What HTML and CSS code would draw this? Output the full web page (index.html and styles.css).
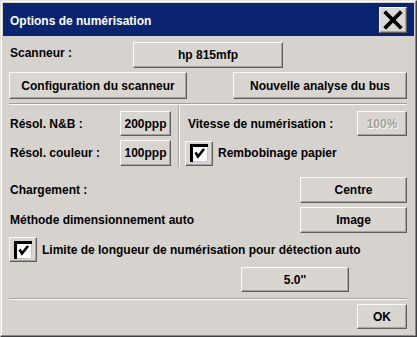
FILE: index.html
```html
<!DOCTYPE html>
<html lang="fr">
<head>
<meta charset="UTF-8" />
<title>Options de numérisation</title>
<link rel="stylesheet" href="styles.css">
</head>
<body>

<div class="fenetre">
  <div class="titre">
    <span>Options de numérisation</span>
    <button class="btn fermer" aria-label="Fermer">
      <svg width="20" height="20" viewBox="0 0 20 20"><path d="M3 3L17 17M17 3L3 17" stroke="#000" stroke-width="3.8" stroke-linecap="square" fill="none"/></svg>
    </button>
  </div>

  <div class="contenu">
    <div class="ligne l-scanneur">
      <span class="lib lib-scan">Scanneur :</span>
      <button class="btn b-scan">hp 815mfp</button>
    </div>

    <div class="ligne l-config">
      <button class="btn b-config">Configuration du scanneur</button>
      <button class="btn b-bus">Nouvelle analyse du bus</button>
    </div>

    <div class="sep"></div>

    <div class="section">
      <div class="col-gauche">
        <div class="ligne l-reso">
          <span class="lib lib-reso">Résol. N&amp;B :</span>
          <button class="btn b-ppp">200ppp</button>
        </div>
        <div class="ligne l-reso2">
          <span class="lib lib-reso">Résol. couleur :</span>
          <button class="btn b-ppp">100ppp</button>
        </div>
      </div>
      <div class="sep-v"></div>
      <div class="col-droite">
        <div class="ligne l-reso">
          <span class="lib lib-vit">Vitesse de numérisation :</span>
          <button class="btn b-vit" disabled>100%</button>
        </div>
        <div class="ligne l-reso2">
          <span class="btn case">
            <svg width="18" height="18" viewBox="0 0 18 18"><rect width="18" height="18" fill="#fff"/><path d="M0 0H18V3H3V18H0Z" fill="#000"/><path d="M17.5 3V17.5H3" stroke="#c9c7c3" fill="none"/><path d="M5.5 8.5L8 12.5L14 5" stroke="#000" stroke-width="2.6" fill="none"/></svg>
          </span>
          <span class="lib lib-case">Rembobinage papier</span>
        </div>
      </div>
    </div>

    <div class="ligne l-charg">
      <span class="lib">Chargement :</span>
      <button class="btn b-droite">Centre</button>
    </div>
    <div class="ligne l-meth">
      <span class="lib">Méthode dimensionnement auto</span>
      <button class="btn b-droite">Image</button>
    </div>

    <div class="ligne l-limite">
      <span class="btn case">
        <svg width="18" height="18" viewBox="0 0 18 18"><rect width="18" height="18" fill="#fff"/><path d="M0 0H18V3H3V18H0Z" fill="#000"/><path d="M17.5 3V17.5H3" stroke="#c9c7c3" fill="none"/><path d="M5.5 8.5L8 12.5L14 5" stroke="#000" stroke-width="2.6" fill="none"/></svg>
      </span>
      <span class="lib lib-case">Limite de longueur de numérisation pour détection auto</span>
    </div>
    <div class="ligne l-long">
      <button class="btn b-long">5.0''</button>
    </div>

    <div class="sep sep-bas"></div>

    <div class="ligne l-ok">
      <button class="btn b-ok">OK</button>
    </div>
  </div>
</div>

</body>
</html>
```

FILE: styles.css
```css
body { margin: 0; background: #d6d3ce; font-family: "Liberation Sans", Arial, sans-serif; font-size: 12px; font-weight: bold; color: #000; }

.fenetre {
  width: 417px;
  height: 337px;
  box-sizing: border-box;
  border: 1px solid;
  border-color: #e6e4e0 #404040 #404040 #e6e4e0;
  box-shadow: inset -1px -1px #8a8884, inset 1px 1px #fff;
  padding: 2px;
  background: #d6d3ce;
}

.titre {
  height: 33px;
  background: #0b2470;
  color: #fff;
  display: flex;
  align-items: center;
  justify-content: space-between;
  padding: 0 7px 0 7px;
  font-size: 12px;
}
.titre span { margin-top: 2px; }

.btn {
  font-family: inherit;
  font-size: 12px;
  font-weight: bold;
  color: #000;
  background: #d9d6d1;
  border: 1px solid;
  border-color: #fbfaf8 #5e5d5a #5e5d5a #fbfaf8;
  box-shadow: inset -1px -1px #a6a4a0;
  box-sizing: border-box;
  padding: 0;
  margin: 0;
  display: flex;
  align-items: center;
  justify-content: center;
}

.fermer { width: 28px; height: 26px; background: #dcd9d4; }

.contenu { padding: 0 7px 0 6px; }

.ligne { display: flex; align-items: center; }
.lib { padding-left: 1px; }

.l-scanneur { margin-top: 6px; height: 26px; }
.lib-scan { width: 123px; margin-top: -4px; }
.b-scan { width: 150px; height: 26px; }

.l-config { margin-top: 4px; height: 27px; justify-content: space-between; }
.b-config { width: 178px; height: 27px; }
.b-bus { width: 174px; height: 27px; }

.sep { margin-top: 4px; height: 0; border-top: 1px solid #a3a19d; border-bottom: 1px solid #fbfaf8; }

.section { display: flex; height: 63px; }
.col-gauche { width: 169px; }
.sep-v { width: 0; height: 62px; border-left: 1px solid #a3a19d; border-right: 1px solid #fbfaf8; }
.col-droite { flex: 1; padding-left: 5px; }

.l-reso { margin-top: 6px; height: 25px; }
.l-reso2 { margin-top: 4px; height: 26px; }
.lib-reso { width: 110px; }
.b-ppp { width: 51px; height: 100%; }

.lib-vit { padding-left: 3px; flex: 1; }
.b-vit { width: 50px; height: 25px; color: #a3a19d; text-shadow: 1px 1px #fbfaf8; }

.case { width: 28px; height: 25px; }
.lib-case { padding-left: 5px; }

.l-charg { margin-top: 9px; height: 26px; justify-content: space-between; }
.l-meth { margin-top: 4px; height: 26px; justify-content: space-between; }
.b-droite { width: 107px; height: 26px; }

.l-limite { margin-top: 4px; height: 25px; }

.l-long { margin-top: 5px; height: 25px; }
.b-long { margin-left: 232px; width: 108px; height: 25px; }

.sep-bas { margin-top: 6px; }

.l-ok { margin-top: 4px; height: 25px; justify-content: flex-end; }
.b-ok { width: 50px; height: 25px; }
```
